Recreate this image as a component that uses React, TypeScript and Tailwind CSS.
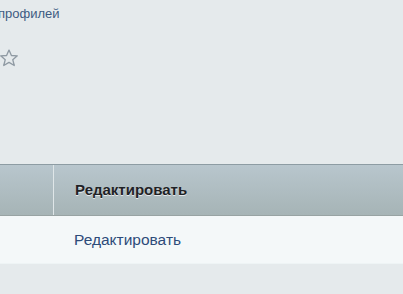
export default function App() {
  return (
    <div
      className="w-[403px] h-[294px] overflow-hidden bg-[#e5eaec] flex flex-col"
      style={{ fontFamily: '"Liberation Sans", Arial, sans-serif' }}
    >
      <div className="pt-[6px] text-[13px] leading-[15px] text-[#3d5b82] -ml-[2px]">профилей</div>

      <div className="mt-[27px] -ml-[1px] h-[20px] flex items-center">
        <svg width="20" height="20" viewBox="0 0 24 24" fill="none" stroke="#8f9aa3" strokeWidth="1.6" strokeLinejoin="round">
          <polygon points="12,2.5 14.9,9 22,9.4 16.5,14 18.3,21 12,17.2 5.7,21 7.5,14 2,9.4 9.1,9" />
        </svg>
      </div>

      <div className="mt-[96px]">
        <div className="flex h-[52px] border-t border-t-[#8d9ca3] border-b border-b-[#98a3a3] bg-gradient-to-b from-[#b8c6cd] to-[#a6b4b6]">
          <div className="w-[54px] shrink-0 border-r border-r-[#dfe6e8]" />
          <div className="flex items-center pl-[21px] pt-[1px] text-[15px] font-bold text-[#1f2226] [text-shadow:0_1px_0_rgba(255,255,255,0.7)]">
            Редактировать
          </div>
        </div>
        <div className="flex h-[48px] bg-[#f4f8f9] border-b border-b-[#eef4f5]">
          <div className="w-[55px] shrink-0" />
          <div className="flex items-center pl-[19px] text-[15.5px] text-[#2d4b79]">Редактировать</div>
        </div>
      </div>
    </div>
  )
}
